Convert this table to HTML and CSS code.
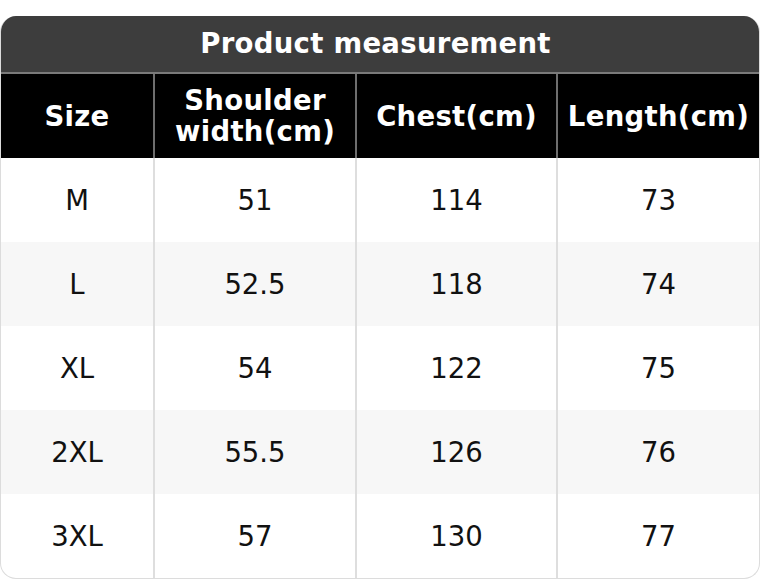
FILE: index.html
```html
<!DOCTYPE html>
<html>
<head>
<meta charset="utf-8">
<link rel="stylesheet" href="styles.css">
</head>
<body>
<div class="card">
  <div class="title">Product measurement</div>
  <table class="sizes">
    <colgroup>
      <col class="c1"><col class="c2"><col class="c3"><col class="c4">
    </colgroup>
    <thead>
      <tr><th>Size</th><th>Shoulder<br>width(cm)</th><th>Chest(cm)</th><th>Length(cm)</th></tr>
    </thead>
    <tbody>
      <tr><td>M</td><td>51</td><td>114</td><td>73</td></tr>
      <tr><td>L</td><td>52.5</td><td>118</td><td>74</td></tr>
      <tr><td>XL</td><td>54</td><td>122</td><td>75</td></tr>
      <tr><td>2XL</td><td>55.5</td><td>126</td><td>76</td></tr>
      <tr><td>3XL</td><td>57</td><td>130</td><td>77</td></tr>
    </tbody>
  </table>
</div>
</body>
</html>
```
FILE: styles.css
```css
html, body { margin: 0; padding: 0; background: #fff; }
body { font-family: "DejaVu Sans", sans-serif; }
.card {
  margin-top: 16px;
  width: 760px;
  box-sizing: border-box;
  border: 1px solid #dcdcdc;
  border-top: none;
  border-radius: 16px;
  overflow: hidden;
}
.title {
  height: 56px;
  box-sizing: content-box;
  padding-right: 9px;
  background: #3d3d3d;
  color: #fff;
  font-weight: bold;
  font-size: 27.5px;
  letter-spacing: 0.3px;
  line-height: 55px;
  text-align: center;
  border-bottom: 2px solid #7a7a7a;
}
.sizes {
  width: 100%;
  border-collapse: collapse;
  table-layout: fixed;
}
.c1 { width: 153px; }
.c2 { width: 202px; }
.c3 { width: 201px; }
.c4 { width: auto; }
.sizes th, .sizes td {
  text-align: center;
  padding: 0;
  height: 84px;
  font-size: 27.5px;
}
.sizes th {
  background: #000;
  color: #fff;
  font-weight: bold;
  letter-spacing: 0.3px;
  line-height: 31px;
  border-left: 2px solid #6e6e6e;
}
.sizes td {
  color: #111;
  border-left: 2px solid #dedede;
}
.sizes th:first-child, .sizes td:first-child { border-left: none; }
.sizes tbody tr:nth-child(even) td { background: #f7f7f7; }
```
